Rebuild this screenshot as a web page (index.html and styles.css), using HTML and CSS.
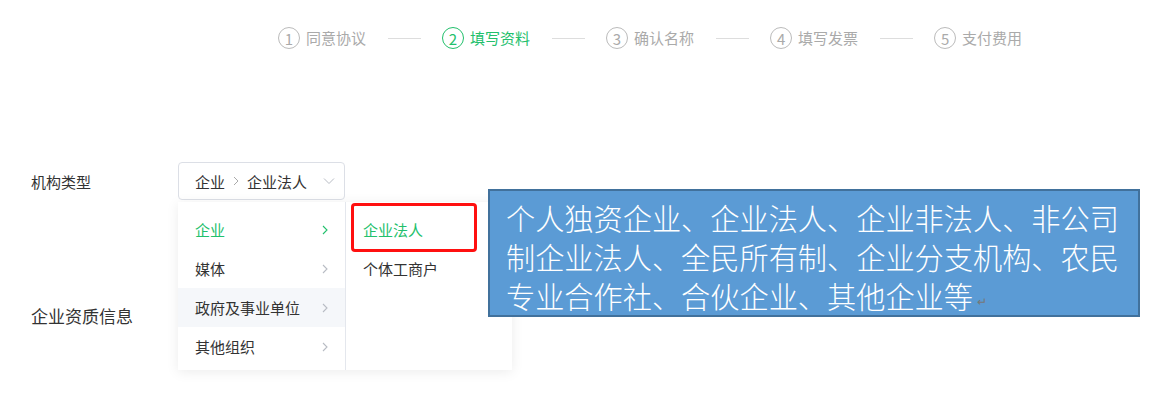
FILE: index.html
```html
<!DOCTYPE html>
<html lang="zh-CN">
<head>
<meta charset="utf-8">
<title>填写资料</title>
<link rel="stylesheet" href="styles.css">
</head>
<body>
<div class="page">
  <div class="steps">
    <div class="step"><span class="num">1</span><span class="label">同意协议</span></div>
    <span class="line"></span>
    <div class="step active"><span class="num">2</span><span class="label">填写资料</span></div>
    <span class="line"></span>
    <div class="step"><span class="num">3</span><span class="label">确认名称</span></div>
    <span class="line"></span>
    <div class="step"><span class="num">4</span><span class="label">填写发票</span></div>
    <span class="line"></span>
    <div class="step"><span class="num">5</span><span class="label">支付费用</span></div>
  </div>

  <div class="form">
    <div class="row row-type">
      <div class="form-label">机构类型</div>
      <div class="select-wrap">
        <div class="select">
          <span>企业</span>
          <svg class="sep" width="6" height="10" viewBox="0 0 6 10"><path d="M1 1l4 4-4 4" fill="none" stroke="#aaa" stroke-width="1"/></svg>
          <span>企业法人</span>
          <svg class="caret" width="12" height="8" viewBox="0 0 12 8"><path d="M1 1.5l5 5 5-5" fill="none" stroke="#b8bcc4" stroke-width="1"/></svg>
        </div>
        <div class="dropdown">
          <ul class="menu">
            <li class="item active"><span>企业</span><svg width="6" height="10" viewBox="0 0 6 10"><path d="M1 1l4 4-4 4" fill="none" stroke="currentColor" stroke-width="1.1"/></svg></li>
            <li class="item"><span>媒体</span><svg width="6" height="10" viewBox="0 0 6 10"><path d="M1 1l4 4-4 4" fill="none" stroke="currentColor" stroke-width="1.1"/></svg></li>
            <li class="item hover"><span>政府及事业单位</span><svg width="6" height="10" viewBox="0 0 6 10"><path d="M1 1l4 4-4 4" fill="none" stroke="currentColor" stroke-width="1.1"/></svg></li>
            <li class="item"><span>其他组织</span><svg width="6" height="10" viewBox="0 0 6 10"><path d="M1 1l4 4-4 4" fill="none" stroke="currentColor" stroke-width="1.1"/></svg></li>
          </ul>
          <ul class="menu menu2">
            <li class="item active"><span>企业法人</span></li>
            <li class="item"><span>个体工商户</span></li>
          </ul>
        </div>
        <div class="highlight"></div>
      </div>
    </div>
    <div class="row row-qual">
      <div class="form-label big">企业资质信息</div>
    </div>
  </div>

  <div class="callout">
    <p>个人独资企业、企业法人、企业非法人、非公司制企业法人、全民所有制、企业分支机构、农民专业合作社、合伙企业、其他企业等<span class="ret">↵</span></p>
  </div>
</div>
</body>
</html>
```

FILE: styles.css
```css
* { box-sizing: border-box; }
html, body { margin: 0; padding: 0; background: #fff; }
body {
  font-family: "Noto Sans CJK SC", "Noto Sans", sans-serif;
  color: #333;
  width: 1160px;
  height: 418px;
  overflow: hidden;
}
.page { position: relative; width: 1160px; height: 418px; }

.steps {
  display: flex;
  align-items: center;
  padding: 27px 0 0 278px;
  height: 49px;
}
.step { display: flex; align-items: center; gap: 6px; color: #aaa; font-size: 15px; }
.step .num {
  width: 22px; height: 22px;
  border: 1px solid #bbb;
  border-radius: 50%;
  display: flex; align-items: center; justify-content: center;
  font-size: 15px; line-height: 1;
  color: #aaa;
}
.step .label { line-height: 22px; }
.step.active { color: #22c06c; }
.step.active .num { border: 1.5px solid #22c06c; color: #22c06c; }
.line { width: 33px; height: 1px; background: #ddd; margin: 0 21px 0 22px; }

.form { margin-top: 113px; }
.row { display: flex; align-items: center; height: 38px; }
.form-label { width: 178px; padding-left: 31px; font-size: 15px; color: #333; }
.form-label.big { font-size: 17px; }
.row-qual { margin-top: 96px; }

.select-wrap { position: relative; }
.select {
  width: 167px; height: 38px;
  border: 1px solid #dcdfe6;
  border-radius: 4px;
  display: flex; align-items: center;
  padding-left: 16px;
  font-size: 15px;
  color: #333;
  background: #fff;
}
.select .sep { margin: 0 8px 0 8px; }
.select .caret { margin-left: auto; margin-right: 9px; }

.dropdown {
  position: absolute;
  left: 0; top: 40px;
  display: flex;
  background: #fff;
  box-shadow: 0 2px 12px rgba(0,0,0,0.08);
  z-index: 2;
}
.menu {
  list-style: none; margin: 0;
  padding: 8px 0 0;
  width: 167px; height: 168px;
}
.menu + .menu { border-left: 1px solid #e4e7ed; }
.item {
  height: 39px;
  display: flex; align-items: center; justify-content: space-between;
  padding: 0 17px 0 17px;
  font-size: 15px;
  color: #333;
}
.item svg { color: #b8bcc4; }
.item.active { color: #22c06c; }
.item.active svg { color: #22c06c; }
.item.hover { background: #f5f7fa; }
.menu2 .item { padding-left: 17px; }

.highlight {
  position: absolute;
  left: 173px; top: 41px;
  width: 126px; height: 49px;
  border: 3px solid #ff1010;
  border-radius: 4px;
  z-index: 3;
}

.callout {
  position: absolute;
  left: 488px; top: 189px;
  width: 652px; height: 128px;
  background: #5b9bd5;
  border: 2px solid #41719c;
  padding: 7px 0 0 16px;
  z-index: 4;
}
.callout p {
  margin: 0;
  width: 620px;
  color: #fff;
  font-size: 29.2px;
  line-height: 39px;
  font-weight: 300;
}
.callout .ret {
  display: inline-block;
  font-size: 12px;
  line-height: 12px;
  color: #777;
  margin-left: 4px;
  vertical-align: 2px;
}
```
